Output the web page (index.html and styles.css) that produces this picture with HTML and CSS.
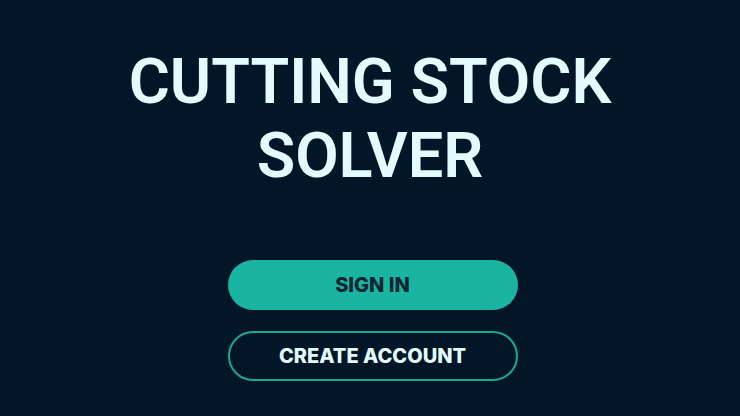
FILE: index.html
```html
<!DOCTYPE html>
<html>
<head>
<meta charset="utf-8">
<link rel="stylesheet" href="styles.css">
</head>
<body>
<main class="screen">
  <h1 class="title">CUTTING STOCK<br>SOLVER</h1>
  <div class="actions">
    <button class="btn btn-primary">SIGN IN</button>
    <button class="btn btn-outline">CREATE ACCOUNT</button>
  </div>
</main>
</body>
</html>
```
FILE: styles.css
```css
html, body {
  margin: 0;
  padding: 0;
  background: #031628;
}
.screen {
  width: 740px;
  height: 416px;
  display: flex;
  flex-direction: column;
  align-items: center;
  box-sizing: border-box;
  padding-top: 45px;
}
.title {
  margin: 0;
  font-family: Roboto, "Liberation Sans", sans-serif;
  font-weight: 600;
  font-size: 63px;
  line-height: 74px;
  color: #e2fbfc;
  text-align: center;
}
.actions {
  margin-top: 67px;
  display: flex;
  flex-direction: column;
  gap: 21px;
  padding-left: 5px;
}
.btn {
  width: 290px;
  height: 50px;
  border-radius: 25px;
  font-family: Inter, "Liberation Sans", sans-serif;
  font-weight: 800;
  font-size: 20px;
  cursor: pointer;
  box-sizing: border-box;
  padding: 0;
}
.btn-primary {
  background: #1ab5a0;
  border: none;
  color: #0a2533;
}
.btn-outline {
  background: transparent;
  border: 2px solid #1aa895;
  color: #e2fbfc;
}
```
